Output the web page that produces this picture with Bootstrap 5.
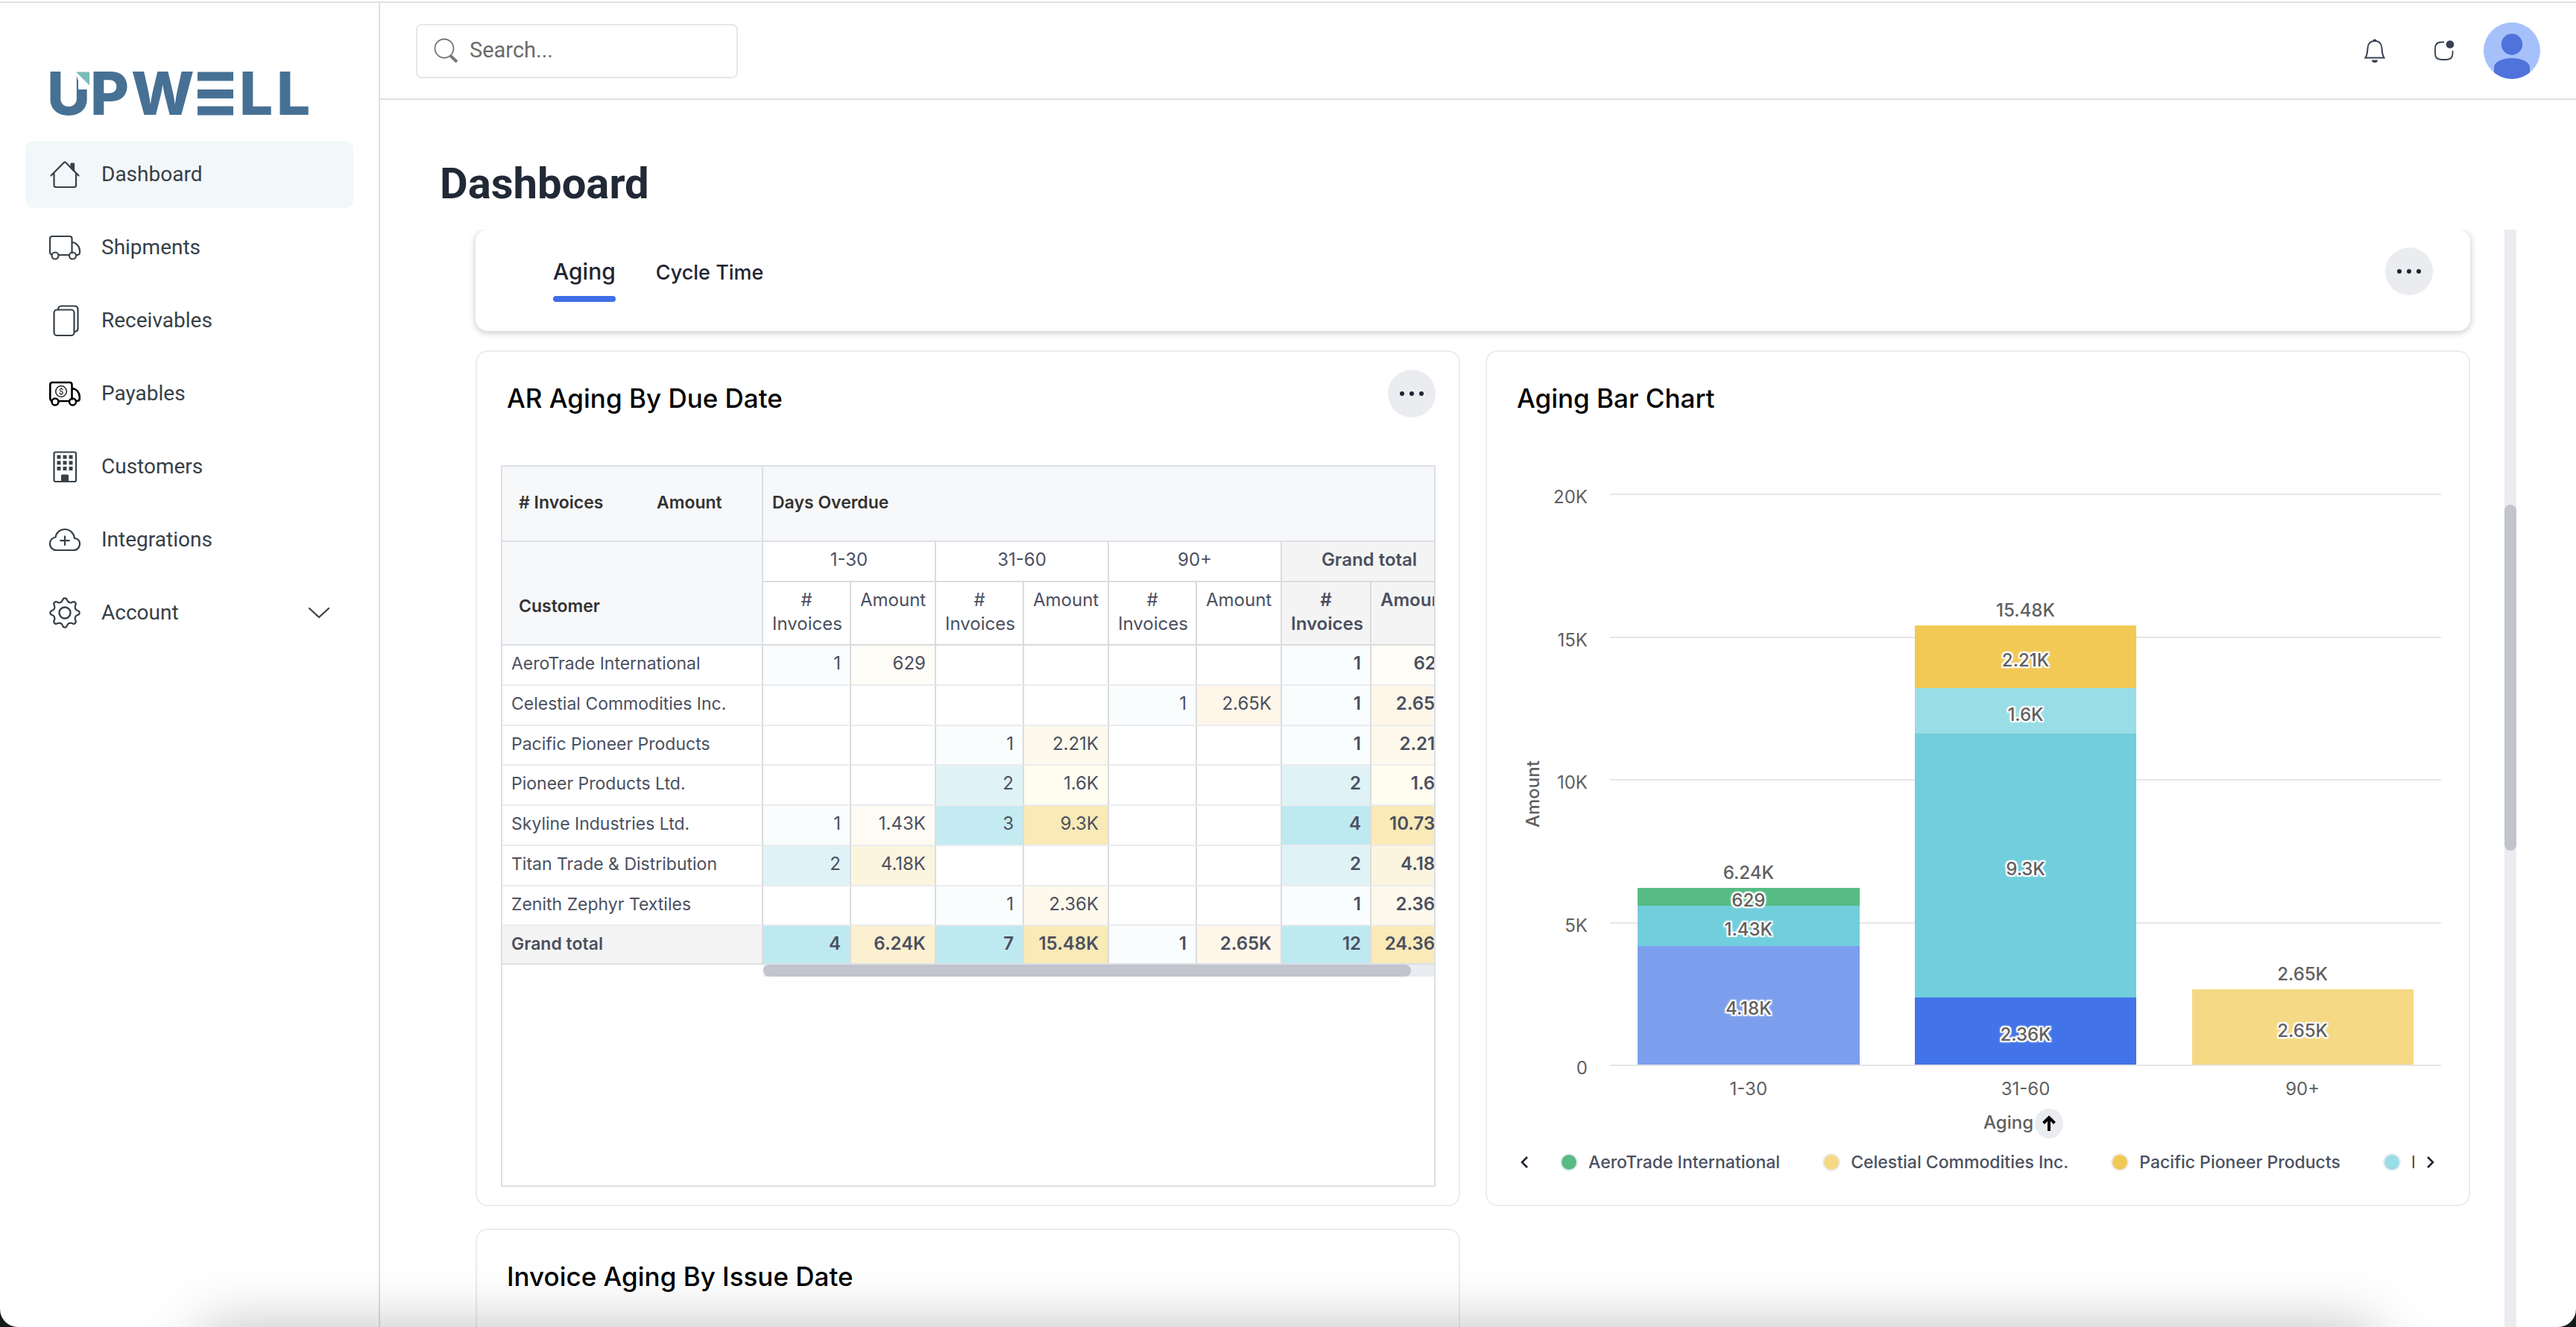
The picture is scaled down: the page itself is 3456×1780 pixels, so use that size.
<!DOCTYPE html>
<html lang="en">
<head>
<meta charset="utf-8">
<meta name="viewport" content="width=device-width, initial-scale=1">
<title>Upwell – Dashboard</title>
<link href="https://cdn.jsdelivr.net/npm/bootstrap@5.3.0/dist/css/bootstrap.min.css" rel="stylesheet">
<style>
  :root { --line: #e0e0e0; --soft: #ebecf0; --grid: #dcdfe5; --ink: #1f2430; --slate: #4b5060; --nav: #374047; }
  body { background: #141c1a; font-family: Roboto, "Liberation Sans", sans-serif; color: var(--nav); }
  .app { border-radius: 0 0 24px 24px; padding-top: 2px; }
  .app-frame { border-top: 2px solid var(--line); min-height: 0; }

  /* sidebar */
  .side { width: 510px; border-right: 2px solid var(--line); padding: 84px 34px 0; }
  .brand { margin: 0 0 25px 32px; line-height: 0; }
  .brand svg { overflow: visible; }
  .brand text { font: 800 80px Inter, sans-serif; fill: #477194; }
  .side-nav { gap: 8px; }
  .side-link { height: 90px; padding: 0 32px; gap: 28px; border-radius: 10px; font-size: 28px; color: var(--nav); text-decoration: none; }
  .side-link.active { background: #f2f7fa; }
  .ico { fill: none; stroke: currentColor; stroke-width: 2.2; stroke-linecap: round; stroke-linejoin: round; flex: none; }

  /* top bar */
  .topbar { height: 130px; border-bottom: 2px solid var(--line); padding: 0 48px; }
  .search-box { width: 432px; height: 73px; border: 2px solid #e6e6ec; border-radius: 8px; padding: 0 22px; gap: 12px; }
  .search-box input { border: 0; outline: 0; background: none; font-size: 29px; min-width: 0; color: #333; }
  .search-box input::placeholder { color: #6b6b6b; opacity: 1; }
  .plain-btn { border: 0; background: none; padding: 0; line-height: 0; color: #374151; }
  .updates { margin: 0 36px 0 62px; }
  .page-title { font-size: 58px; line-height: 72px; font-weight: 700; color: #212936; padding: 76px 80px 26px; }

  /* scrolling pane */
  .pane { padding: 0 80px 0 128px; gap: 46px; min-height: 0; overflow: hidden; }
  .board { font-family: Inter, "Liberation Sans", sans-serif; min-width: 0; }
  .track { width: 16px; background: var(--soft); }
  .track .thumb { background: #c1c4cd; border-radius: 8px; }
  .tabs-bar { height: 136px; border-radius: 16px; box-shadow: 0 2px 10px rgba(0,0,0,.24); padding: 0 50px 0 104px; margin-bottom: 26px; }
  .tabs-bar .tabs { gap: 54px; }
  .tab-link { font-size: 27px; line-height: 34px; font-weight: 500; color: var(--ink); text-decoration: none; padding-bottom: 20px; }
  .tab-link.active { font-size: 30px; padding-bottom: 0; }
  .tab-link.active::after { content: ""; display: block; height: 8px; margin-top: 16px; border-radius: 4px; background: #3f6ee8; }
  .more { width: 64px; height: 64px; border: 0; border-radius: 50%; background: var(--soft); padding: 0; line-height: 0; flex: none; }
  .tabs-bar .more { margin-bottom: 24px; }

  .tiles { display: grid; grid-template-columns: repeat(2, minmax(0, 1fr)); gap: 30px 34px; }
  .tile { border: 2px solid var(--soft); border-radius: 16px; padding: 24px 31px 24px 32px; background: #fff; }
  .tile-head { height: 64px; margin-bottom: 64px; }
  .tile-title { font-size: 35px; line-height: 40px; font-weight: 500; color: #000; padding: 18px 8px 0; margin: 0; }

  /* pivot table */
  .pivot-box { height: 968px; border: 2px solid var(--grid); overflow: hidden; }
  .pivot { table-layout: fixed; width: 1282px; border-collapse: separate; border-spacing: 0; font-size: 24px; line-height: 32px; color: var(--slate); }
  .pivot th, .pivot td { padding: 8px 12px 0; vertical-align: top; font-weight: 400; border: solid #dcdcdc; border-width: 0 2px 2px 0; white-space: nowrap; }
  .pivot thead th { text-align: center; }
  .pivot .corner { background: #f7f8fa; border-color: var(--grid); color: #333; font-weight: 600; font-size: 23px; text-align: left; }
  .pivot .r1 th { height: 101px; vertical-align: middle; padding-top: 0; padding-bottom: 4px; }
  .pivot .measures { padding-left: 10px; }
  .pivot .measures span:first-child { width: 185px; }
  .pivot .r2 th { height: 54px; }
  .pivot .r3 th { height: 85px; white-space: normal; }
  .pivot .r2 .cust { vertical-align: bottom; padding: 0 22px 35px; }
  .pivot .tot { background: #f4f4f4; font-weight: 600; }
  .pivot tbody tr { height: 54px; }
  .pivot tbody tr:nth-child(4n+3) { height: 53px; }
  .pivot tbody tr:last-child { height: 52px; }
  .pivot tbody td { text-align: right; border-bottom-color: var(--soft); }
  .pivot tbody th { font-size: 23px; border-bottom-color: var(--soft); }
  .pivot tbody td:nth-child(n+8), .pivot tbody tr:last-child > * { font-weight: 600; }
  .pivot tbody tr:last-child > * { border-bottom-color: var(--grid); }
  .n1 { background: #f9fdfe; } .n2 { background: #dff3f7; } .n3 { background: #c4ebf2; } .n4 { background: #bee9f0; }
  .a1 { background: #fffdf7; } .a2 { background: #fefbf4; } .a3 { background: #fffcf0; } .a4 { background: #fdf9ec; }
  .a5 { background: #fef6e9; } .a6 { background: #fbf5e0; } .a7 { background: #fbf0d0; } .a8 { background: #f9eab7; }
  .h-track { height: 16px; margin-left: 350px; background: var(--soft); }
  .h-track div { height: 16px; width: calc(100% - 31px); border-radius: 8px; background: #c1c4cd; }

  /* bar chart */
  .chart { display: grid; grid-template-columns: 32px 57px minmax(0, 1fr); padding: 39px 6px 0 14px; font-size: 24px; line-height: 32px; color: #606060; }
  .y-name { writing-mode: vertical-rl; transform: rotate(180deg); text-align: center; padding-bottom: 38px; font-weight: 500; }
  .y-ticks { margin: -12px 0 -20px; text-align: right; }
  .plot { position: relative; height: 766px; margin-left: 30px; }
  .grid-lines { position: absolute; inset: -1px 0; }
  .grid-lines i { height: 2px; background: #e6e6e6; }
  .bars { position: relative; height: 100%; padding: 4px 0 1px; }
  .bar-slot { flex: 1; height: 100%; }
  .bar-slot > div { width: 80%; }
  .bar-sum { text-align: center; padding-bottom: 4px; font-weight: 500; }
  .seg { display: flex; align-items: center; justify-content: center; padding-top: 10px; font-weight: 500; line-height: 20px; position: relative;
         text-shadow: 2px 0 1px #fff, -2px 0 1px #fff, 0 2px 1px #fff, 0 -2px 1px #fff, 2px 2px 1px #fff, -2px 2px 1px #fff, 2px -2px 1px #fff, -2px -2px 1px #fff, 0 0 5px #fff; }
  .seg.c-aero { z-index: 1; }
  .c-aero { background: #57bb84; } .c-cel { background: #f5d984; } .c-pac { background: #f2c955; } .c-pio { background: #99dde7; }
  .c-sky { background: #71cedc; } .c-tit { background: #7c9fed; } .c-zen { background: #4273e8; }
  .x-part { grid-column: 3; margin-left: 30px; }
  .x-ticks { padding-top: 16px; }
  .x-ticks span { flex: 1; text-align: center; }
  .x-name { margin-top: 10px; height: 40px; line-height: 38px; font-weight: 500; padding-right: 6px; gap: 2px; }
  .sort { width: 38px; height: 40px; border: 0; border-radius: 50%; background: var(--soft); padding: 0; line-height: 0; }
  .legend-row { margin-top: 16px; padding: 0 14px 0 12px; font-size: 23px; line-height: 32px; font-weight: 500; color: var(--slate); }
  .legend-list { flex: 1; min-width: 0; overflow: hidden; gap: 57px; margin: 0 16px 0 42px; padding: 0; list-style: none; }
  .legend-list li { display: flex; align-items: center; gap: 14px; white-space: nowrap; flex: none; }
  .dot { width: 24px; height: 24px; border-radius: 50%; border: 2px solid var(--soft); }

  /* shade cast by the floating dock below the window */
  .dock-shade { position: fixed; top: 100%; left: 270px; right: 270px; height: 200px; box-shadow: 0 0 80px rgba(0,0,0,.25); pointer-events: none; z-index: 5; }
</style>
<script src="https://cdn.jsdelivr.net/npm/bootstrap@5.3.0/dist/js/bootstrap.bundle.min.js"></script>
</head>
<body>
<div class="app vh-100 bg-white d-flex flex-column overflow-hidden position-relative">
 <div class="app-frame d-flex flex-grow-1">

  <aside class="side flex-shrink-0">
    <div class="brand">
      <svg width="350" height="76" viewBox="0 0 350 76" role="img" aria-label="UPWELL">
        <text x="-3 55 110" y="66">UPW</text>
        <path fill="#fff" d="M33 4h24v28H39V20z"/>
        <path fill="#78bbb8" d="M36 8.500h18v18z"/>
        <path fill="#477194" d="M199 8.500h48v12h-48zM199 32h48v12h-48zM199 54.500h48v12h-48z"/>
        <text x="255 305" y="66">LL</text>
      </svg>
    </div>
    <nav class="side-nav d-flex flex-column" aria-label="Main">
      <a class="side-link active d-flex align-items-center" href="#">
        <svg class="ico" width="42" height="42" viewBox="0 0 42 42"><path d="M2.500 22.500 19.800 5q1.200-1 2.400 0l17.300 17.500M6.500 20v15.500q0 2.500 2.500 2.500h24.500q2.500 0 2.500-2.500V20"/><path d="M29.500 6.500h3.500v9.500l-3.500-3.500z" fill="currentColor"/></svg>
        Dashboard</a>
      <a class="side-link d-flex align-items-center" href="#">
        <svg class="ico" width="42" height="42" viewBox="0 0 42 42"><path d="M3.500 30.500Q1 30 1 27.500V9q0-3 3-3h23.500q3 0 3 3v19.500M13 31h14M30.500 14c5.500 0 10.500 5.500 10.500 11v3q0 3-4.500 3"/><circle cx="8" cy="32" r="4.500"/><circle cx="31.500" cy="32" r="4.500"/></svg>
        Shipments</a>
      <a class="side-link d-flex align-items-center" href="#">
        <svg class="ico" width="42" height="42" viewBox="0 0 42 42"><rect x="6.500" y="6.500" width="27" height="34.500" rx="4"/><path d="M12 6.500q0-5 4.500-5H34q4.500 0 4.500 4.500v25.500q0 4-4.500 4.500"/></svg>
        Receivables</a>
      <a class="side-link d-flex align-items-center" href="#">
        <svg class="ico text-black" width="42" height="42" viewBox="0 0 42 42"><g stroke-width="2.600"><path d="M3.500 30.500Q1.300 30 1.300 27.500V9q0-3 3-3h23.200q3 0 3 3v19.500M13 31h14M30.500 14c5.500 0 10.200 5.500 10.200 11v3q0 3-4.200 3"/><circle cx="8" cy="32" r="4.500"/><circle cx="31.500" cy="32" r="4.500"/></g><circle cx="16" cy="18" r="7.300" stroke-width="1.300"/><text x="16" y="22" font-size="11" text-anchor="middle" fill="#000" stroke="none">$</text></svg>
        Payables</a>
      <a class="side-link d-flex align-items-center" href="#">
        <svg class="ico" width="42" height="42" viewBox="0 0 42 42"><rect x="6.500" y="1.500" width="29.500" height="39.500" rx="2"/><path stroke="none" fill="currentColor" d="M10.500 5.500h5v5h-5zM18.500 5.500h5v5h-5zM26.500 5.500h5v5h-5zM10.500 13.200h5v5h-5zM18.500 13.200h5v5h-5zM26.500 13.200h5v5h-5zM10.500 21h5v5h-5zM18.500 21h5v5h-5zM26.500 21h5v5h-5zM16 33q0-1.500 1.500-1.500h7q1.500 0 1.500 1.500v8H16z"/></svg>
        Customers</a>
      <a class="side-link d-flex align-items-center" href="#">
        <svg class="ico" width="42" height="42" viewBox="0 0 42 42"><path d="M9.500 35C5 35 1 31.500 1 26.500 1 21.500 4.500 18.500 8.500 17.500 9.500 11 14.500 7 21 7c7 0 12 5 13 12 4.500.500 7 3.500 7 7.500 0 5-3.500 8.500-8 8.500zM21 16.500v11.500M15.200 22.200h11.600"/></svg>
        Integrations</a>
      <a class="side-link d-flex align-items-center" href="#">
        <svg class="ico" width="42" height="42" viewBox="0 0 42 42"><defs><path id="tooth" d="M15.200 7C17.200 6.200 17.400 5.500 18 4 18.800.500 23.200.500 24 4c.600 1.500.800 2.200 2.800 3"/></defs><circle cx="21" cy="21" r="7.500" stroke-width="2.400"/><use href="#tooth"/><use href="#tooth" transform="rotate(45 21 21)"/><use href="#tooth" transform="rotate(90 21 21)"/><use href="#tooth" transform="rotate(135 21 21)"/><use href="#tooth" transform="rotate(180 21 21)"/><use href="#tooth" transform="rotate(225 21 21)"/><use href="#tooth" transform="rotate(270 21 21)"/><use href="#tooth" transform="rotate(315 21 21)"/></svg>
        <span class="flex-grow-1">Account</span>
        <svg class="ico" width="28" height="16" viewBox="0 0 28 16"><path d="m1 2 13 12L27 2"/></svg></a>
    </nav>
  </aside>

  <div class="d-flex flex-column flex-grow-1 overflow-hidden">
    <header class="topbar d-flex align-items-center flex-shrink-0">
      <form class="search-box d-flex align-items-center me-auto" role="search">
        <svg class="flex-shrink-0" width="34" height="34" viewBox="0 0 34 34" fill="none" stroke="#777"><circle cx="14" cy="14" r="12.500" stroke-width="1.800"/><path d="m22.500 24 8.500 8" stroke-width="4"/></svg>
        <input type="search" class="flex-grow-1" placeholder="Search..." aria-label="Search">
      </form>
      <button class="plain-btn" type="button" aria-label="Notifications">
        <svg width="32" height="34" viewBox="0 0 32 34" fill="none" stroke="currentColor" stroke-width="2"><path d="M16 4C9.500 4 6.700 8.500 6.500 13.500 6.300 20 5.500 23 3.500 26.500h25C26.500 23 25.700 20 25.500 13.500 25.300 8.500 22.500 4 16 4z"/><path d="M13.500 4a2.500 2.500 0 0 1 5 0zM12 29.500h8a4 3.500 0 0 1-8 0z" fill="currentColor" stroke="none"/></svg>
      </button>
      <button class="plain-btn updates" type="button" aria-label="Updates">
        <svg width="32" height="34" viewBox="0 0 32 34" fill="none" stroke="currentColor" stroke-width="1.800"><path d="M15 5.500h-3.500q-8.500 0-8.500 8.500v6.500q0 8.500 8.500 8.500h6.500q8.500 0 8.500-8.500V17"/><circle cx="23" cy="8.500" r="5.300" fill="currentColor" stroke="none"/></svg>
      </button>
      <button class="plain-btn" type="button" aria-label="Profile">
        <svg width="76" height="76" viewBox="0 0 76 76"><defs><clipPath id="disc"><circle cx="38" cy="38" r="38"/></clipPath></defs><g clip-path="url(#disc)"><path fill="#a6c1fa" d="M0 0h76v76H0z"/><g fill="#4f73da"><circle cx="38" cy="29.500" r="14.200"/><path d="M14 76V61c0-8 11-13 24-13s24 5 24 13v15z"/></g></g></svg>
      </button>
    </header>

    <h1 class="page-title m-0 flex-shrink-0">Dashboard</h1>

    <main class="pane d-flex flex-grow-1">
      <div class="board flex-grow-1">
        <div class="tabs-bar d-flex align-items-center justify-content-between bg-white">
          <nav class="tabs d-flex align-items-center" aria-label="Dashboard sections">
            <a class="tab-link active" href="#">Aging</a>
            <a class="tab-link" href="#">Cycle Time</a>
          </nav>
          <button class="more" type="button" aria-label="Dashboard options"><svg width="32" height="8" viewBox="0 0 32 8" fill="#1f2430"><circle cx="3" cy="4" r="3"/><circle cx="16" cy="4" r="3"/><circle cx="29" cy="4" r="3"/></svg></button>
        </div>

        <div class="tiles">
          <section class="tile">
            <div class="tile-head d-flex justify-content-between">
              <h2 class="tile-title">AR Aging By Due Date</h2>
              <button class="more" type="button" aria-label="Widget options"><svg width="32" height="8" viewBox="0 0 32 8" fill="#1f2430"><circle cx="3" cy="4" r="3"/><circle cx="16" cy="4" r="3"/><circle cx="29" cy="4" r="3"/></svg></button>
            </div>
            <div class="pivot-box">
              <table class="pivot">
                <colgroup><col style="width:350px"><col style="width:118px"><col style="width:114px"><col style="width:118px"><col style="width:114px"><col style="width:118px"><col style="width:114px"><col style="width:120px"><col style="width:116px"></colgroup>
                <thead>
                  <tr class="r1"><th class="corner"><div class="measures d-flex"><span># Invoices</span><span>Amount</span></div></th><th class="corner" colspan="8">Days Overdue</th></tr>
                  <tr class="r2"><th class="corner cust" rowspan="2">Customer</th><th colspan="2">1-30</th><th colspan="2">31-60</th><th colspan="2">90+</th><th class="tot" colspan="2">Grand total</th></tr>
                  <tr class="r3"><th># Invoices</th><th>Amount</th><th># Invoices</th><th>Amount</th><th># Invoices</th><th>Amount</th><th class="tot"># Invoices</th><th class="tot">Amount</th></tr>
                </thead>
                <tbody>
                  <tr><th>AeroTrade International</th><td class="n1">1</td><td class="a1">629</td><td></td><td></td><td></td><td></td><td class="n1">1</td><td class="a1">629</td></tr>
                  <tr><th>Celestial Commodities Inc.</th><td></td><td></td><td></td><td></td><td class="n1">1</td><td class="a5">2.65K</td><td class="n1">1</td><td class="a5">2.65K</td></tr>
                  <tr><th>Pacific Pioneer Products</th><td></td><td></td><td class="n1">1</td><td class="a4">2.21K</td><td></td><td></td><td class="n1">1</td><td class="a4">2.21K</td></tr>
                  <tr><th>Pioneer Products Ltd.</th><td></td><td></td><td class="n2">2</td><td class="a3">1.6K</td><td></td><td></td><td class="n2">2</td><td class="a3">1.6K</td></tr>
                  <tr><th>Skyline Industries Ltd.</th><td class="n1">1</td><td class="a2">1.43K</td><td class="n3">3</td><td class="a8">9.3K</td><td></td><td></td><td class="n4">4</td><td class="a8">10.73K</td></tr>
                  <tr><th>Titan Trade &amp; Distribution</th><td class="n2">2</td><td class="a6">4.18K</td><td></td><td></td><td></td><td></td><td class="n2">2</td><td class="a6">4.18K</td></tr>
                  <tr><th>Zenith Zephyr Textiles</th><td></td><td></td><td class="n1">1</td><td class="a4">2.36K</td><td></td><td></td><td class="n1">1</td><td class="a4">2.36K</td></tr>
                  <tr><th class="tot">Grand total</th><td class="n4">4</td><td class="a7">6.24K</td><td class="n4">7</td><td class="a8">15.48K</td><td class="n1">1</td><td class="a5">2.65K</td><td class="n4">12</td><td class="a8">24.36K</td></tr>
                </tbody>
              </table>
              <div class="h-track"><div></div></div>
            </div>
          </section>

          <section class="tile">
            <div class="tile-head"><h2 class="tile-title">Aging Bar Chart</h2></div>
            <div class="chart">
              <div class="y-name">Amount</div>
              <div class="y-ticks d-flex flex-column justify-content-between"><span>20K</span><span>15K</span><span>10K</span><span>5K</span><span>0</span></div>
              <div class="plot">
                <div class="grid-lines d-flex flex-column justify-content-between"><i></i><i></i><i></i><i></i><i></i></div>
                <div class="bars d-flex">
                  <div class="bar-slot d-flex flex-column justify-content-end align-items-center">
                    <div class="bar-sum">6.24K</div>
                    <div class="seg c-aero" style="height:3.14%">629</div>
                    <div class="seg c-sky" style="height:7.15%">1.43K</div>
                    <div class="seg c-tit" style="height:20.9%">4.18K</div>
                  </div>
                  <div class="bar-slot d-flex flex-column justify-content-end align-items-center">
                    <div class="bar-sum">15.48K</div>
                    <div class="seg c-pac" style="height:11.05%">2.21K</div>
                    <div class="seg c-pio" style="height:8%">1.6K</div>
                    <div class="seg c-sky" style="height:46.5%">9.3K</div>
                    <div class="seg c-zen" style="height:11.8%">2.36K</div>
                  </div>
                  <div class="bar-slot d-flex flex-column justify-content-end align-items-center">
                    <div class="bar-sum">2.65K</div>
                    <div class="seg c-cel" style="height:13.25%">2.65K</div>
                  </div>
                </div>
              </div>
              <div class="x-part">
                <div class="x-ticks d-flex"><span>1-30</span><span>31-60</span><span>90+</span></div>
                <div class="x-name d-flex justify-content-center">Aging
                  <button class="sort" type="button" aria-label="Sort"><svg width="20" height="24" viewBox="0 0 20 24" fill="none" stroke="#000" stroke-width="4"><path d="M10 22V4M2.500 11.500 10 4l7.500 7.500"/></svg></button>
                </div>
              </div>
            </div>
            <div class="legend-row d-flex align-items-center">
              <button class="plain-btn" type="button" aria-label="Previous"><svg width="12" height="16" viewBox="0 0 12 16" fill="none" stroke="#1f2430" stroke-width="2.600"><path d="M10 1 3 8l7 7"/></svg></button>
              <ul class="legend-list d-flex">
                <li><span class="dot c-aero"></span>AeroTrade International</li>
                <li><span class="dot c-cel"></span>Celestial Commodities Inc.</li>
                <li><span class="dot c-pac"></span>Pacific Pioneer Products</li>
                <li><span class="dot c-pio"></span>Pioneer Products Ltd.</li>
              </ul>
              <button class="plain-btn" type="button" aria-label="Next"><svg width="12" height="16" viewBox="0 0 12 16" fill="none" stroke="#1f2430" stroke-width="2.600"><path d="m2 1 7 7-7 7"/></svg></button>
            </div>
          </section>

          <section class="tile">
            <div class="tile-head"><h2 class="tile-title">Invoice Aging By Issue Date</h2></div>
          </section>
        </div>
      </div>
      <div class="track d-flex flex-column flex-shrink-0" aria-hidden="true">
        <div style="flex:369"></div><div class="thumb" style="flex:464"></div><div style="flex:639"></div>
      </div>
    </main>
  </div>
 </div>
 <div class="dock-shade"></div>
</div>
</body>
</html>
